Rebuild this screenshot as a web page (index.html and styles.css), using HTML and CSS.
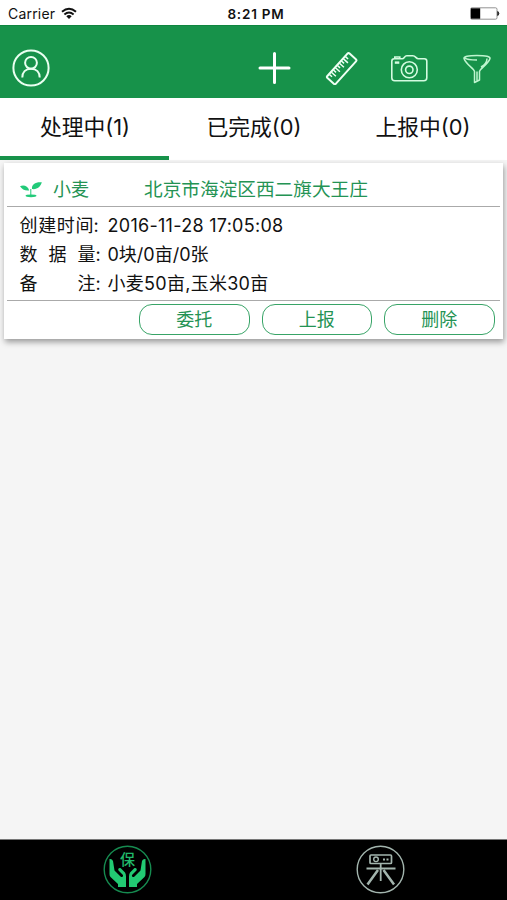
FILE: index.html
```html
<!DOCTYPE html>
<html lang="zh-CN">
<head>
<meta charset="utf-8">
<meta name="viewport" content="width=device-width, initial-scale=1">
<title>任务列表</title>
<link rel="stylesheet" href="styles.css">
</head>
<body>
<div class="app">
  <div class="status">
    <div class="carrier"><span>Carrier</span>
      <svg width="16" height="13" viewBox="0 0 16 13"><g fill="none" stroke="#111" stroke-width="2"><path d="M1 4.8Q8-1.2 15 4.8"/><path d="M3.4 7.5Q8 3.6 12.6 7.5"/></g><path fill="#111" d="M5.3 9.2Q8 7 10.7 9.2L8 12Z"/></svg>
    </div>
    <span class="clock">8:21 PM</span>
    <svg class="battery" width="30" height="13" viewBox="0 0 30 13"><rect x=".5" y=".8" width="26.5" height="11.4" rx="1.5" fill="#fff" stroke="#777" stroke-width=".8"/><path d="M1 1.3h9.2v10.4H1z"/><path d="M27.8 4.5q2 2 0 4z" fill="#222" stroke="#222"/></svg>
  </div>
  <header class="toolbar">
    <svg class="user" width="38" height="38" viewBox="0 0 38 38" fill="none" stroke="#e9fff0" stroke-width="2"><circle cx="19" cy="19" r="17.6"/><circle cx="19" cy="13.8" r="5.9"/><path d="M10.3 28.5c0-5.2 3.2-8.8 8.7-8.8s8.7 3.6 8.7 8.8"/></svg>
    <div class="tools">
      <svg width="34" height="34" viewBox="0 0 34 34" stroke="#fff" stroke-width="3" stroke-linecap="round"><path d="M3 17h29M17.500 2.500v29"/></svg>
      <svg width="34" height="34" viewBox="0 0 34 34" fill="none" stroke="#effff4"><g transform="rotate(-48 17.500 17.500)"><rect x="1" y="12" width="33" height="11.500" rx="1.5" stroke-width="2"/><path stroke-width="1.5" d="M5 12.500v3.500M8 12.500v6M11 12.500v3.500M14 12.500v6M17 12.500v3.500M20 12.500v6M23 12.500v3.500M26 12.500v6M29 12.500v3.500"/></g></svg>
      <svg width="38" height="34" viewBox="0 0 38 34" fill="none" stroke="#d4fbe0" stroke-width="1.6"><g transform="translate(-.7 .8)"><path d="M4 7h8c2 0 2-3 4.500-3h6C25.500 4 25.500 7 28 7h6q2.500 0 2.500 2.500V26q0 3-3 3H4.500q-3 0-3-3V9.500Q1.500 7 4 7z"/><path d="M4.500 7V5.200h5V7" /><circle cx="19" cy="18" r="8"/><circle cx="19" cy="18" r="3.700"/><path d="M4.500 10.800h4.500" stroke-width="2.400"/></g></svg>
      <svg width="30" height="34" viewBox="0 0 30 34" fill="none" stroke="#bff5cf" stroke-width="1.500" stroke-linejoin="round"><path d="M2 7.500Q1.500 4.500 15 4.500T28 7.500C26 13.500 18 17.500 17.500 20.500v8.500L12.500 31.500V20.500C12 17.500 4 13.500 2 7.500zM3 7q2 2 12 2M15 20.500v9M19 16q6-3.500 6-8.500"/></svg>
    </div>
  </header>
  <nav class="tabs">
    <div class="tab active">处理中(1)</div>
    <div class="tab">已完成(0)</div>
    <div class="tab">上报中(0)</div>
  </nav>
  <main>
    <article class="card">
      <div class="heading">
        <svg width="24" height="18" viewBox="0 0 24 18" fill="#22ca79"><path d="M1 5.300c3-1.700 8-.8 9.200 4.200C6 10 3 8.500 1 5.300zM13 8c-.5-5 4-7.300 9.800-6.700C21.500 6 18 8.800 13 8zM11.300 8h1v6h-1z"/><ellipse cx="12" cy="14.800" rx="5.500" ry="1.400"/></svg>
        <span class="crop">小麦</span><span class="place">北京市海淀区西二旗大王庄</span>
      </div>
      <div class="details">
        <div class="row"><span class="label"><i>创</i><i>建</i><i>时</i><i>间</i></span><span class="colon">:</span><span class="date">2016-11-28 17:05:08</span></div>
        <div class="row"><span class="label wide"><i>数</i><i>据</i><i>量</i></span><span class="colon">:</span><span>0块/0亩/0张</span></div>
        <div class="row"><span class="label wide"><i>备</i><i>注</i></span><span class="colon">:</span><span class="note">小麦50亩,玉米30亩</span></div>
      </div>
      <div class="actions"><button>委托</button><button>上报</button><button>删除</button></div>
    </article>
  </main>
  <footer class="bottom">
    <div class="dock"><svg width="50" height="50" viewBox="0 0 50 50"><circle cx="25.500" cy="24.500" r="23.300" fill="none" stroke="#168b50" stroke-width="1.400"/><text class="badge" x="25.500" y="20" text-anchor="middle">保</text><path fill="#22ca73" d="M7.500 14q2.500-.5 3.500 2l1.500 9.500 6 6c2 1.500 3.500-.5 2-2l-4-4c-1-2 1-3 2.500-2l4 4q1 1.500 1 4V42h-8v-3l-7.500-7q-1-1-1-3zM43.500 14q-2.500-.5-3.500 2l-1.500 9.500-6 6c-2 1.500-3.500-.5-2-2l4-4c1-2-1-3-2.500-2l-4 4Q27 29 27 31.500V42h8v-3l7.500-7q1-1 1-3z"/></svg></div>
    <div class="dock"><svg width="50" height="50" viewBox="0 0 50 50" fill="none" stroke="#a3b5ae"><circle cx="25.500" cy="24.500" r="23.300" stroke-width="1.400"/><rect x="15" y="10" width="21.500" height="8.500" rx="1" stroke-width="1.700"/><circle cx="21" cy="14.300" r="2.300" stroke-width="1.400"/><path stroke-width="1.800" d="M28 14.500h2M31.500 14.500h2M25.700 18.500V36M11.500 23.500h29"/><path stroke-width="2.500" d="M23 25L12.500 39.500M28.500 25L39 39.500"/></svg></div>
  </footer>
</div>
</body>
</html>
```
FILE: styles.css
```css
* { box-sizing: border-box; }
body { margin: 0; font-family: Inter, "Noto Sans CJK SC", sans-serif; color: #111; }
svg { display: block; flex-shrink: 0; }
.app { height: 900px; display: flex; flex-direction: column; background: #f5f5f5; overflow: hidden; }
.status { height: 25px; display: grid; grid-template-columns: 1fr auto 1fr; align-items: center; padding: 2px 7px 0 8px; background: #fff; font-size: 14px; }
.carrier { display: flex; align-items: center; gap: 6px; letter-spacing: .2px; }
.clock { font-size: 13.5px; font-weight: 600; letter-spacing: .9px; letter-spacing: .8px; padding-left: 4px; }
.battery { justify-self: end; }
.toolbar { height: 73px; background: #17924a; display: flex; align-items: center; justify-content: space-between; padding: 12px 15px 0 12px; border-top: 1px solid #0f853f; }
.tools { display: flex; align-items: center; gap: 33px; }
.tabs { height: 62px; display: flex; background: #fff; flex-shrink: 0; }
.tab { flex: 1; height: 62px; padding: 13px 0 0 1px; text-align: center; font-size: 21.8px; line-height: 32px; border-bottom: 4px solid transparent; }
.tab.active { border-color: #17924a; }
main { flex: 1; padding: 3px 4px; }
.card { height: 176px; background: #fff; box-shadow: 1px 3px 6px rgba(0,0,0,.38); padding: 0 3px; display: flex; flex-direction: column; }
.heading { height: 44px; border-bottom: 1px solid #aaa; display: flex; align-items: center; padding: 10px 0 0 12px; color: #249354; font-size: 18px; line-height: 28px; }
.crop { width: 101px; padding-left: 10px; }
.place { font-size: 18.67px; }
.details { height: 94px; border-bottom: 1px solid #aaa; padding: 4px 0 0 12.5px; font-size: 18px; }
.row { height: 29px; line-height: 30px; display: flex; white-space: nowrap; }
.label { width: 74px; display: flex; justify-content: space-between; }
.label.wide { width: 76px; }
.label i { font-style: normal; }
.colon { width: 14px; }
.wide + .colon { width: 12px; }
.date { letter-spacing: .28px; }
.note { letter-spacing: .28px; }
.actions { display: flex; justify-content: flex-end; gap: 12px; padding: 3px 5.5px 0 0; }
button { width: 110.500px; height: 31px; padding: 0; border: 1.500px solid #38a467; border-radius: 13px; background: #fff; color: #249354; font: 18px/27px Inter, "Noto Sans CJK SC", sans-serif; }
.bottom { height: 61px; background: #000; display: flex; flex-shrink: 0; border-top: 1px solid #777; }
.dock { flex: 1; display: flex; justify-content: center; padding-top: 5px; }
.badge { font: 500 15px "Noto Sans CJK SC", sans-serif; fill: #20b96b; }
```
